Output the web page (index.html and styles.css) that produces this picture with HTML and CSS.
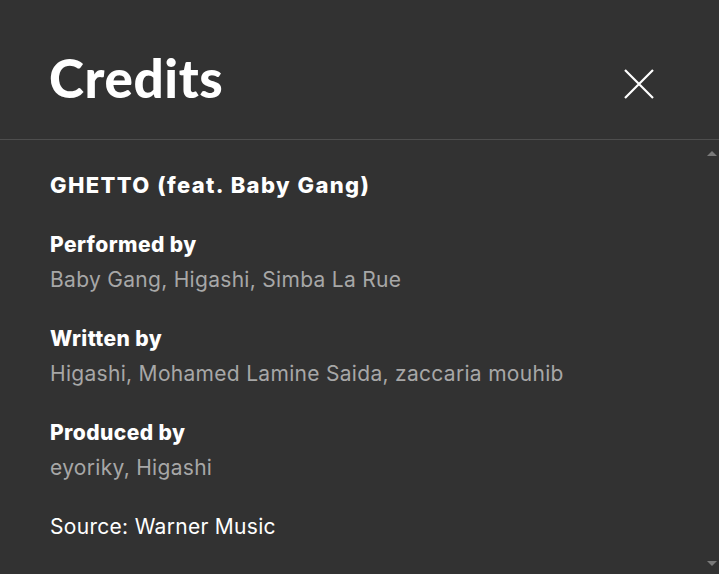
FILE: index.html
```html
<!DOCTYPE html>
<html lang="en">
<head>
<meta charset="utf-8">
<title>Credits</title>
<link rel="stylesheet" href="styles.css">
</head>
<body>
<div class="dialog">
  <header class="header">
    <h1 class="title">Credits</h1>
    <button class="close" aria-label="Close">
      <svg width="30" height="30" viewBox="0 0 30 30"><path d="M1 1 L29 29 M29 1 L1 29" stroke="#fff" stroke-width="2.2" fill="none"/></svg>
    </button>
  </header>
  <div class="body">
    <div class="content">
      <h2 class="song">GHETTO (feat. Baby Gang)</h2>
      <div class="section">
        <div class="label">Performed by</div>
        <div class="value">Baby Gang, Higashi, Simba La Rue</div>
      </div>
      <div class="section">
        <div class="label">Written by</div>
        <div class="value">Higashi, Mohamed Lamine Saida, zaccaria mouhib</div>
      </div>
      <div class="section">
        <div class="label">Produced by</div>
        <div class="value">eyoriky, Higashi</div>
      </div>
      <div class="section">
        <div class="source">Source: Warner Music</div>
      </div>
    </div>
    <div class="scrollbar">
      <span class="arrow up"></span>
      <span class="arrow down"></span>
    </div>
  </div>
</div>
</body>
</html>
```

FILE: styles.css
```css
* { box-sizing: border-box; }
html, body {
  margin: 0;
  padding: 0;
  background: #323232;
  height: 100%;
  overflow: hidden;
}
body {
  font-family: Inter, "Noto Sans", sans-serif;
  color: #fff;
}
.dialog {
  display: flex;
  flex-direction: column;
  height: 574px;
}
.header {
  height: 140px;
  flex: none;
  display: flex;
  justify-content: space-between;
  align-items: flex-start;
  padding: 0 65px 0 49px;
  border-bottom: 1px solid #4e4e4e;
}
.title {
  margin: 46px 0 0;
  font-family: Lato, sans-serif;
  font-size: 53px;
  line-height: 64px;
  font-weight: 900;
  letter-spacing: 0.6px;
}
.close {
  margin-top: 69px;
  padding: 0;
  border: 0;
  background: none;
  width: 30px;
  height: 30px;
  display: block;
}
.close svg { display: block; }
.body {
  flex: 1;
  display: flex;
  min-height: 0;
}
.content {
  flex: 1;
  padding: 28px 0 0 50px;
}
.song {
  margin: 0;
  font-size: 22px;
  line-height: 35px;
  font-weight: 800;
  letter-spacing: 1.35px;
  word-spacing: 0.5px;
}
.section {
  margin-top: 24px;
}
.label {
  font-size: 21px;
  line-height: 35px;
  font-weight: 800;
  letter-spacing: 0.42px;
}
.value {
  font-size: 21px;
  line-height: 35px;
  color: #a7a7a7;
  letter-spacing: 0.3px;
}
.source {
  font-size: 21px;
  line-height: 35px;
  letter-spacing: 0.3px;
}
.scrollbar {
  width: 15px;
  flex: none;
  display: flex;
  flex-direction: column;
  justify-content: space-between;
  align-items: center;
  padding: 11px 0 8px;
}
.arrow {
  width: 0;
  height: 0;
  border-left: 5px solid transparent;
  border-right: 5px solid transparent;
}
.arrow.up { border-bottom: 5px solid #7a7a7a; }
.arrow.down { border-top: 5px solid #7a7a7a; }
```
